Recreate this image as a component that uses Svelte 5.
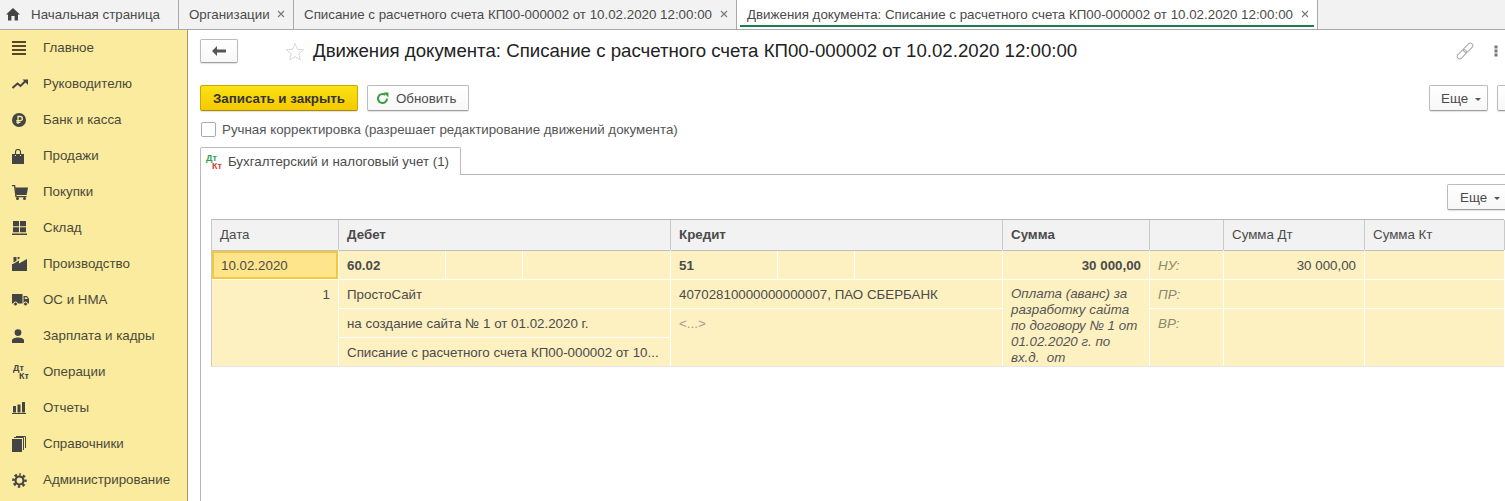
<script lang="ts">
  const TABS = [
    { label: "Организации", width: 115 },
    { label: "Списание с расчетного счета КП00-000002 от 10.02.2020 12:00:00", width: 443 },
    { label: "Движения документа: Списание с расчетного счета КП00-000002 от 10.02.2020 12:00:00", width: 581, active: true },
  ];

  const MENU = [
    { label: "Главное", icon: "menu" },
    { label: "Руководителю", icon: "trend" },
    { label: "Банк и касса", icon: "ruble" },
    { label: "Продажи", icon: "bag" },
    { label: "Покупки", icon: "cart" },
    { label: "Склад", icon: "store" },
    { label: "Производство", icon: "factory" },
    { label: "ОС и НМА", icon: "truck" },
    { label: "Зарплата и кадры", icon: "person" },
    { label: "Операции", icon: "dtkt" },
    { label: "Отчеты", icon: "bars" },
    { label: "Справочники", icon: "books" },
    { label: "Администрирование", icon: "gear" },
  ];

  const HEADERS = [
    { label: "Дата" },
    { label: "Дебет", bold: true },
    { label: "Кредит", bold: true },
    { label: "Сумма", bold: true },
    { label: "" },
    { label: "Сумма Дт" },
    { label: "Сумма Кт" },
  ];
</script>

<div class="app">
  <nav class="tabbar">
    <div class="tab home">
      <svg width="16" height="14" viewBox="0 0 16 14"><path d="M8 1 L15 7.5 H13 V13.5 H9.6 V9 H6.4 V13.5 H3 V7.5 H1 Z" fill="#444" /></svg>
      <span>Начальная страница</span>
    </div>
    {#each TABS as tab (tab.label)}
      <div class="tab" class:active={tab.active} style="width: {tab.width}px">
        <span>{tab.label}</span>
        <svg class="close" width="8" height="8" viewBox="0 0 8 8"><path d="M1 1 L7 7 M7 1 L1 7" stroke="#777" stroke-width="1.1" /></svg>
      </div>
    {/each}
  </nav>

  <div class="body">
    <aside class="sidebar">
      {#each MENU as item (item.label)}
        <div class="menu-item">
          <span class="menu-icon">
            {#if item.icon === "menu"}
              <svg width="14" height="14" viewBox="0 0 14 14"><path d="M0 1h14M0 5h14M0 9h14M0 13h14" stroke="#55492a" stroke-width="2" /></svg>
            {:else if item.icon === "trend"}
              <svg width="16" height="10" viewBox="0 0 16 10"><path d="M.5 9 L5.5 4.5 L8.5 7 L13.5 2" fill="none" stroke="#444" stroke-width="2" /><path d="M10.5 .5 H16 V6 Z" fill="#444" /></svg>
            {:else if item.icon === "ruble"}
              <svg width="14" height="14" viewBox="0 0 14 14"><circle cx="7" cy="7" r="7" fill="#444" /><path d="M6 11V3.5H8.2a2 2 0 0 1 0 4.2H4.3M4.3 9.4H8.4" fill="none" stroke="#fbeb9e" stroke-width="1.3" /></svg>
            {:else if item.icon === "bag"}
              <svg width="12" height="15" viewBox="0 0 12 15"><path d="M0 5H3V7H4V5H8V7H9V5H12V15H0Z" fill="#444" /><path d="M3.5 6V2.8a2.5 2.3 0 0 1 5 0V6" fill="none" stroke="#444" stroke-width="1.2" /></svg>
            {:else if item.icon === "cart"}
              <svg width="16" height="15" viewBox="0 0 16 15"><path d="M3 2.5H16L14.6 10H4.2Z" fill="#444" /><path d="M0 .7H2.6L4 11.7H14.5" fill="none" stroke="#444" stroke-width="1.3" /><circle cx="5.5" cy="13.5" r="1.5" fill="#444" /><circle cx="12.5" cy="13.5" r="1.5" fill="#444" /></svg>
            {:else if item.icon === "store"}
              <svg width="15" height="14" viewBox="0 0 15 14"><path d="M1 0H7V5.2H1ZM8 0H14V5.2H8ZM1 6.2H7V11.2H1ZM8 6.2H14V11.2H8ZM0 12.6H15V14H0Z" fill="#444" /></svg>
            {:else if item.icon === "factory"}
              <svg width="15" height="14" viewBox="0 0 15 14"><path d="M1 7L7 3.6V6.6L15 2V14H0V7Z" fill="#444" /><path d="M1.5 0H4.5V3.8L1.5 5.6ZM5.6 0H7.6V1.4L5.6 2.6Z" fill="#444" /></svg>
            {:else if item.icon === "truck"}
              <svg width="17" height="12" viewBox="0 0 17 12"><path d="M0 0H10.5V9.5H0ZM11.5 2H15L17 5V9.5H11.5Z" fill="#444" /><path d="M12.8 3.2H14.6L15.7 5H12.8Z" fill="#fbeb9e" /><circle cx="3.5" cy="10" r="2" fill="#444" stroke="#fbeb9e" /><circle cx="13.5" cy="10" r="2" fill="#444" stroke="#fbeb9e" /></svg>
            {:else if item.icon === "person"}
              <svg width="12" height="14" viewBox="0 0 12 14"><circle cx="6" cy="3.6" r="3.4" fill="#444" /><path d="M0 14V11.4C0 9.4 3 8.4 6 8.4S12 9.4 12 11.4V14Z" fill="#444" /></svg>
            {:else if item.icon === "dtkt"}
              <span class="dtkt dark"><span>Дт</span><span class="kt">Кт</span></span>
            {:else if item.icon === "bars"}
              <svg width="14" height="12" viewBox="0 0 14 12"><path d="M1 4H4V10.5H1ZM5.5 2.5H8.5V10.5H5.5ZM10 0H13V10.5H10ZM0 11H14V12H0Z" fill="#444" /></svg>
            {:else if item.icon === "books"}
              <svg width="14" height="16" viewBox="0 0 14 16"><path d="M0 3H10V16H0Z" fill="#444" /><path d="M2 1.5H11.5V14M4 .5H13.5V12" fill="none" stroke="#444" /></svg>
            {:else if item.icon === "gear"}
              <svg width="15" height="15" viewBox="0 0 15 15"><circle cx="7.5" cy="7.5" r="4" fill="none" stroke="#444" stroke-width="2.2" /><circle cx="7.5" cy="7.5" r="6" fill="none" stroke="#444" stroke-width="2.6" stroke-dasharray="2.4 2.31" stroke-dashoffset="1.2" transform="rotate(-90 7.5 7.5)" /></svg>
            {/if}
          </span>
          <span class="menu-label">{item.label}</span>
        </div>
      {/each}
    </aside>

    <main class="main">
      <header class="title-row">
        <button class="btn back" aria-label="Назад">
          <svg width="14" height="10" viewBox="0 0 14 10"><path d="M0 5 L5 0 V3.5 H14 V6.5 H5 V10 Z" fill="#555" /></svg>
        </button>
        <svg class="star" width="20" height="19" viewBox="0 0 20 19"><path d="M10 1.5 L12.4 7.2 L18.6 7.7 L13.9 11.8 L15.3 17.8 L10 14.6 L4.7 17.8 L6.1 11.8 L1.4 7.7 L7.6 7.2 Z" fill="#fff" stroke="#d8d8d8" /></svg>
        <h1>Движения документа: Списание с расчетного счета КП00-000002 от 10.02.2020 12:00:00</h1>
        <svg class="link" width="18" height="18" viewBox="0 0 18 18"><g transform="rotate(-45 9 9)" fill="none" stroke="#a8a8a8"><rect x="-1" y="6.5" width="11" height="5" rx="2.5" /><rect x="8" y="6.5" width="11" height="5" rx="2.5" /></g></svg>
        <svg class="dots" width="4" height="12" viewBox="0 0 4 12"><path d="M.5 .5h3v3h-3zM.5 4.5h3v3h-3zM.5 8.5h3v3h-3z" fill="#777" /></svg>
      </header>

      <div class="toolbar">
        <button class="btn primary">Записать и закрыть</button>
        <button class="btn refresh">
          <svg width="13" height="13" viewBox="0 0 13 13"><path d="M11 6.5A4.5 4.5 0 1 1 9.2 2.9" fill="none" stroke="#3b9b3f" stroke-width="2" /><path d="M7.6 0.6H12.4V5.4Z" fill="#3b9b3f" /></svg>
          <span>Обновить</span>
        </button>
        <button class="btn more push">Еще <i class="caret"></i></button>
        <button class="btn stub" aria-label="Справка"></button>
      </div>

      <label class="manual">
        <span class="checkbox"></span>
        <span>Ручная корректировка (разрешает редактирование движений документа)</span>
      </label>

      <div class="page-tab">
        <span class="dtkt color"><span>Дт</span><span class="kt">Кт</span></span>
        <span>Бухгалтерский и налоговый учет (1)</span>
      </div>

      <section class="panel">
        <div class="panel-bar">
          <button class="btn more">Еще <i class="caret"></i></button>
        </div>

        <div class="grid">
          {#each HEADERS as head, i (i)}
            <div class="th" class:bold={head.bold}>{head.label}</div>
          {/each}

          <div class="td date">10.02.2020</div>
          <div class="split">
            <div class="td bold">60.02</div><div class="td"></div><div class="td"></div>
          </div>
          <div class="split">
            <div class="td bold">51</div><div class="td"></div><div class="td"></div>
          </div>
          <div class="td bold right">30 000,00</div>
          <div class="td hint">НУ:</div>
          <div class="td right">30 000,00</div>
          <div class="td"></div>

          <div class="td right span3 num">1</div>
          <div class="td">ПростоСайт</div>
          <div class="td">40702810000000000007, ПАО СБЕРБАНК</div>
          <div class="td span3 note">Оплата (аванс) за разработку сайта по договору № 1 от 01.02.2020 г. по вх.д.&nbsp; от</div>
          <div class="td hint">ПР:</div>
          <div class="td"></div>
          <div class="td"></div>

          <div class="td">на создание сайта № 1 от 01.02.2020 г.</div>
          <div class="td span2 empty">&lt;...&gt;</div>
          <div class="td span2 hint">ВР:</div>
          <div class="td span2"></div>
          <div class="td span2"></div>

          <div class="td">Списание с расчетного счета КП00-000002 от 10...</div>
        </div>
      </section>
    </main>
  </div>
</div>

<style>
  :global(body) {
    margin: 0;
    background: #fff;
    font-family: "Liberation Sans", Arial, sans-serif;
  }

  .app {
    width: 1505px;
    height: 501px;
    overflow: hidden;
    display: flex;
    flex-direction: column;
    font-size: 13.33px;
    color: #4b4b4b;
  }

  .tabbar {
    flex: none;
    height: 29px;
    display: flex;
    background: #f2f2f2;
    border-bottom: 1px solid #a9a9a9;
  }

  .tab {
    box-sizing: border-box;
    flex: none;
    display: flex;
    align-items: center;
    justify-content: space-between;
    padding: 0 8px 1px 10px;
    border-right: 1px solid #a9a9a9;
    position: relative;
  }

  .tab.home {
    width: 179px;
    justify-content: flex-start;
    gap: 10px;
    padding-left: 5px;
  }

  .tab.active {
    background: #fff;
  }

  .tab.active::after {
    content: "";
    position: absolute;
    left: 3px;
    right: 3px;
    bottom: 2px;
    height: 2px;
    background: #1f7a4d;
  }

  .body {
    flex: 1;
    display: flex;
    min-height: 0;
  }

  .sidebar {
    flex: none;
    box-sizing: border-box;
    width: 188px;
    background: #fbeb9e;
    border-right: 1px solid #a39a62;
  }

  .menu-item {
    height: 36px;
    display: flex;
    align-items: center;
    color: #4a4a3a;
  }

  .menu-label {
    padding-bottom: 2px;
  }

  .menu-icon {
    flex: none;
    width: 43px;
    padding-left: 12px;
    box-sizing: border-box;
    display: flex;
    align-items: center;
  }

  .dtkt {
    display: inline-flex;
    flex-direction: column;
    font-weight: bold;
    font-size: 9px;
    line-height: 8px;
  }

  .dtkt .kt {
    margin-left: 6px;
  }

  .dtkt.dark {
    color: #444;
    margin-left: 1px;
  }

  .dtkt.color {
    color: #2e9e4a;
  }

  .dtkt.color .kt {
    color: #c8443c;
  }

  .main {
    flex: 1;
    min-width: 0;
    padding-left: 12px;
  }

  .title-row {
    height: 24px;
    margin-top: 9px;
    display: flex;
    align-items: center;
  }

  .title-row h1 {
    margin: 0;
    font-size: 18.67px;
    font-weight: normal;
    color: #222;
    white-space: nowrap;
  }

  .star {
    margin: 0 8px 0 47px;
  }

  .link {
    margin-left: auto;
  }

  .dots {
    margin: 0 7px 0 20px;
  }

  .btn {
    box-sizing: border-box;
    height: 26px;
    padding: 0;
    background: linear-gradient(#fff, #f7f7f7);
    border: 1px solid #bcbcbc;
    border-bottom-color: #a0a0a0;
    border-radius: 2px;
    box-shadow: 0 1px 1px rgba(0, 0, 0, 0.12);
    font: inherit;
    color: #4b4b4b;
    flex: none;
  }

  .btn.back {
    width: 38px;
    height: 24px;
    display: flex;
    align-items: center;
    justify-content: center;
  }

  .toolbar {
    margin-top: 22px;
    display: flex;
    gap: 9px;
  }

  .btn.primary {
    width: 158px;
    background: linear-gradient(#fbe216, #f6c900);
    border-color: #c9a800;
    border-bottom-color: #a88d00;
    color: #333;
    font-weight: bold;
  }

  .btn.refresh {
    width: 102px;
    display: flex;
    align-items: center;
    gap: 7px;
    padding-left: 8px;
  }

  .btn.more {
    width: 59px;
    padding-left: 5px;
  }

  .push {
    margin-left: auto;
  }

  .btn.stub {
    width: 30px;
    margin-right: -22px;
  }

  .caret {
    display: inline-block;
    margin-left: 3px;
    vertical-align: 2px;
    border-left: 3px solid transparent;
    border-right: 3px solid transparent;
    border-top: 3px solid #555;
  }

  .manual {
    margin: 11px 0 0 1px;
    height: 15px;
    display: flex;
    align-items: center;
    gap: 6px;
    color: #555;
  }

  .checkbox {
    box-sizing: border-box;
    width: 15px;
    height: 15px;
    background: #fff;
    border: 1px solid #aaa;
    border-radius: 2px;
  }

  .page-tab {
    box-sizing: border-box;
    width: 261px;
    height: 28px;
    margin-top: 10px;
    display: flex;
    align-items: center;
    gap: 6px;
    padding-left: 5px;
    background: #fff;
    border: 1px solid #bbb;
    border-bottom: 0;
    border-radius: 2px 2px 0 0;
    position: relative;
    z-index: 1;
  }

  .panel {
    margin-top: -1px;
    border-top: 1px solid #b5b5b5;
    border-left: 1px solid #b5b5b5;
    padding-left: 10px;
    height: 340px;
  }

  .panel-bar {
    display: flex;
    justify-content: flex-end;
    margin: 9px -16px 0 0;
    height: 26px;
  }

  .panel-bar .btn.more {
    width: 74px;
    text-align: left;
    padding-left: 12px;
  }

  .grid {
    margin-top: 9px;
    display: grid;
    grid-template-columns: 126px 331px 331px 146px 73px 140px 139px;
    grid-template-rows: 30px 28px 28px 28px 28px;
    column-gap: 1px;
    row-gap: 1px;
    width: 1292px;
    background: #fff;
    border-left: 1px solid #c9c9c9;
    border-top: 1px solid #b8b8b8;
    border-bottom: 1px solid #e6e6e6;
  }

  .th {
    display: flex;
    align-items: center;
    padding: 0 0 2px 8px;
    background: #f2f2f2;
    box-shadow: 1px 0 0 #c9c9c9, 0 1px 0 #c0c0c0;
  }

  .bold {
    font-weight: bold;
  }

  .td {
    min-width: 0;
    padding: 0 8px;
    display: flex;
    align-items: center;
    background: #fdf0c1;
    white-space: nowrap;
    overflow: hidden;
  }

  .split {
    display: grid;
    grid-template-columns: 106px 76px 1fr;
    column-gap: 1px;
  }

  .right {
    justify-content: flex-end;
  }

  .td.date {
    box-sizing: border-box;
    background: #fee48a;
    border: 2px solid #f3c83c;
    padding-left: 7px;
  }

  .span2 {
    grid-row: span 2;
    align-items: flex-start;
    padding-top: 7px;
  }

  .span3 {
    grid-row: span 3;
    align-items: flex-start;
    padding-top: 7px;
  }

  .note {
    display: block;
    white-space: normal;
    font-style: italic;
    line-height: 16px;
    padding-top: 6px;
    color: #555;
  }

  .hint {
    font-style: italic;
    color: #8a8a6e;
  }

  .empty {
    color: #a0a090;
  }

  .num {
    padding-right: 8px;
  }
</style>
